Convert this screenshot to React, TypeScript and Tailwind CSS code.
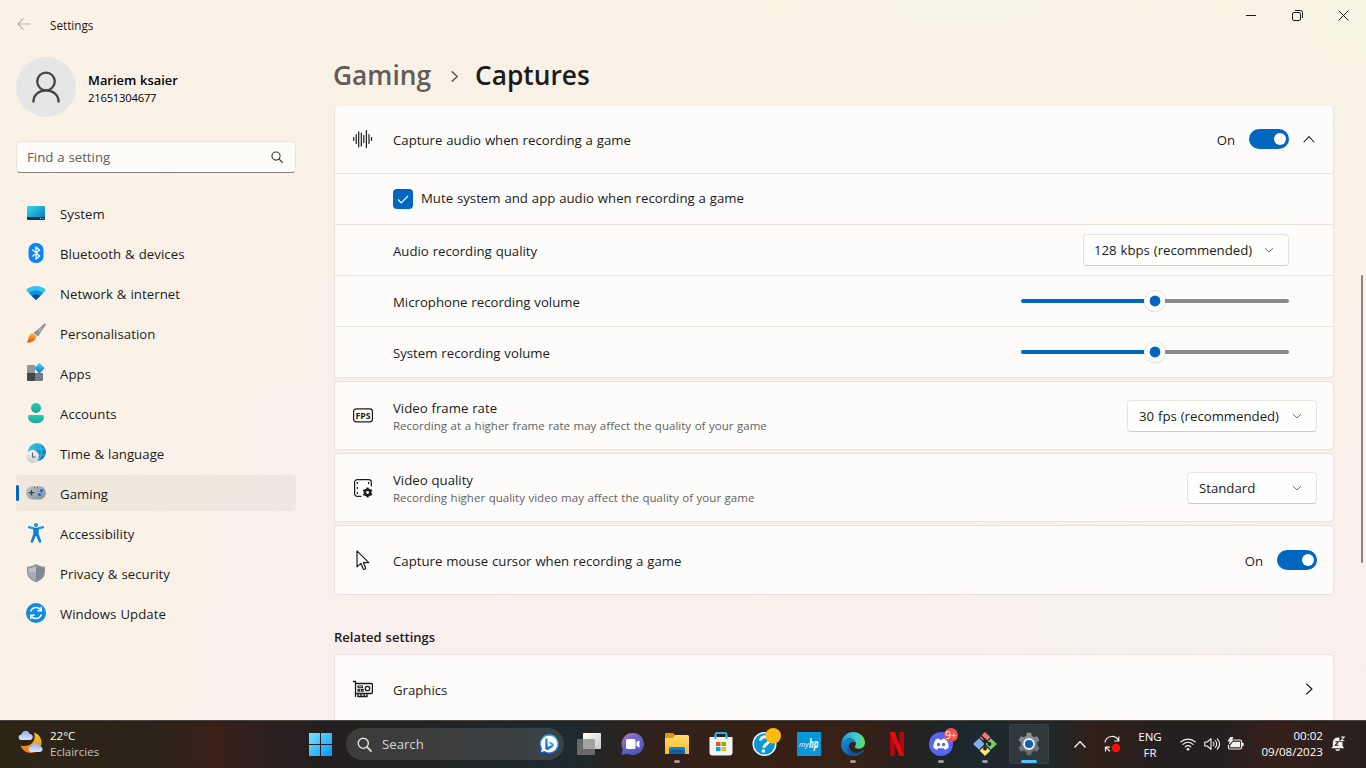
import React from "react";

type IconProps = { className?: string };

const Chevron = ({ dir, size = 12, stroke = 1.1, className = "" }: { dir: "up" | "down" | "right"; size?: number; stroke?: number; className?: string }) => {
  const d = dir === "up" ? "M1 9 6 3.6 11 9" : dir === "down" ? "M1.5 4 6 8.4 10.5 4" : "M3.5 1 9 6 3.5 11";
  return (
    <svg width={size} height={size} viewBox="0 0 12 12" fill="none" stroke="currentColor" className={className}>
      <path d={d} strokeWidth={stroke} strokeLinecap="round" strokeLinejoin="round" />
    </svg>
  );
};

const SystemIcon = () => (
  <svg width="20" height="20" viewBox="0 0 20 20">
    <defs>
      <linearGradient id="sys" x1="0" y1="0" x2="1" y2="1">
        <stop offset="0" stopColor="#35dbe6" />
        <stop offset="1" stopColor="#1170c0" />
      </linearGradient>
    </defs>
    <rect x="1" y="3" width="18" height="14" rx="1" fill="url(#sys)" />
    <path d="M1 14h18v2a1 1 0 0 1-1 1H2a1 1 0 0 1-1-1z" fill="#0b3a5b" />
    <path d="M14 15.500h1M16.500 15.500h1" stroke="#9fd3ea" strokeWidth="1" />
  </svg>
);

const BluetoothIcon = () => (
  <svg width="20" height="20" viewBox="0 0 20 20">
    <rect x="2.500" y="0" width="15" height="20" rx="7" fill="#0a84ff" />
    <path d="M6.300 6.500 13.500 13 10 16V4l3.500 3-7.200 6.500" fill="none" stroke="#fff" strokeWidth="1.300" strokeLinejoin="round" />
  </svg>
);

const WifiColorIcon = () => (
  <svg width="20" height="20" viewBox="0 0 20 20">
    <path d="M10 17 0 7.200C5.500 1.700 14.500 1.700 20 7.200z" fill="#35c5f1" />
    <path d="M10 17 3 10.200c3.900-3.800 10.100-3.800 14 0z" fill="#1590df" />
    <path d="M10 17 5.800 13c2.400-2.200 6-2.200 8.400 0z" fill="#0d4f9e" />
  </svg>
);

const BrushIcon = () => (
  <svg width="20" height="20" viewBox="0 0 20 20">
    <defs>
      <linearGradient id="brA" x1="1" y1="0" x2="0" y2="1">
        <stop offset="0" stopColor="#7b838c" />
        <stop offset=".5" stopColor="#a4abb2" />
        <stop offset="1" stopColor="#676f78" />
      </linearGradient>
      <linearGradient id="brB" x1=".7" y1="0" x2=".4" y2="1">
        <stop offset="0" stopColor="#ffb43a" />
        <stop offset="1" stopColor="#e9560c" />
      </linearGradient>
    </defs>
    <path d="M18.600.5c.9-.3 1.500.5 1 1.400L12.300 13.500 7.600 9.800z" fill="url(#brA)" />
    <path d="M6.200 10.600c1.800-.5 4.100 1.200 3.900 3.200C9.800 18 5 20.300.5 19.300c1.800-1.100 1.600-2.700 2.200-5 .4-1.900 1.700-3.200 3.500-3.700z" fill="url(#brB)" />
  </svg>
);

const AppsIcon = () => (
  <svg width="20" height="20" viewBox="0 0 20 20">
    <defs>
      <linearGradient id="apA" x1="0" y1="0" x2="1" y2="1">
        <stop offset="0" stopColor="#4bd2f5" />
        <stop offset="1" stopColor="#0c6fc9" />
      </linearGradient>
    </defs>
    <path d="M2 2h7v8H1V3a1 1 0 0 1 1-1z" fill="#9298a1" />
    <path d="M1 10h8v8H2a1 1 0 0 1-1-1z" fill="#43484c" />
    <path d="M9 10h8v7a1 1 0 0 1-1 1H9z" fill="#747b84" />
    <rect x="9.600" y="1.500" width="7.600" height="7.600" rx=".8" transform="rotate(45 13.400 5.300)" fill="url(#apA)" />
  </svg>
);

const AccountIcon = () => (
  <svg width="20" height="20" viewBox="0 0 20 20">
    <defs>
      <linearGradient id="acA" x1="0" y1="0" x2="0" y2="1">
        <stop offset="0" stopColor="#29c9b5" />
        <stop offset="1" stopColor="#13a892" />
      </linearGradient>
    </defs>
    <circle cx="10" cy="5" r="5" fill="url(#acA)" />
    <path d="M4 12h12a2 2 0 0 1 2 2c0 4-3.500 6-8 6s-8-2-8-6a2 2 0 0 1 2-2z" fill="url(#acA)" />
  </svg>
);

const TimeIcon = () => (
  <svg width="20" height="20" viewBox="0 0 20 20">
    <defs>
      <linearGradient id="tmA" x1="0" y1="0" x2="1" y2="1">
        <stop offset="0" stopColor="#34d1de" />
        <stop offset="1" stopColor="#0b62b8" />
      </linearGradient>
      <linearGradient id="tmB" x1="0" y1="0" x2="0" y2="1">
        <stop offset="0" stopColor="#f7f7f9" />
        <stop offset="1" stopColor="#c9ccd3" />
      </linearGradient>
    </defs>
    <circle cx="11" cy="9" r="9" fill="url(#tmA)" />
    <g fill="none" stroke="#45c9e2" strokeWidth=".8">
      <ellipse cx="11" cy="9" rx="4.200" ry="8.600" />
      <path d="M3 6h16M3 12h16" />
    </g>
    <circle cx="6.500" cy="13.500" r="6.500" fill="url(#tmB)" />
    <path d="M6.500 9.500v4.500h3" fill="none" stroke="#5b5f66" strokeWidth="1.100" />
  </svg>
);

const GamepadIcon = () => (
  <svg width="20" height="20" viewBox="0 0 20 20">
    <defs>
      <linearGradient id="gpA" x1="0" y1="0" x2="1" y2="1">
        <stop offset="0" stopColor="#c3c8ce" />
        <stop offset="1" stopColor="#858d97" />
      </linearGradient>
    </defs>
    <rect x="0" y="3" width="20" height="13.500" rx="6.700" fill="url(#gpA)" />
    <path d="M5.500 7v5.500M2.800 9.700h5.500" stroke="#3b4046" strokeWidth="1.300" />
    <path d="M8 4.800h1M11 4.800h1" stroke="#3b4046" strokeWidth="1" />
    <circle cx="15.500" cy="7.600" r="1.600" fill="#0b6fd0" />
    <circle cx="13.500" cy="11.600" r="1.600" fill="#0b6fd0" />
  </svg>
);

const AccessIcon = () => (
  <svg width="20" height="20" viewBox="0 0 20 20">
    <circle cx="10" cy="2.100" r="2.100" fill="#1597e4" />
    <path
      d="M3 4.200 10 6l7-1.800"
      fill="none" stroke="#1597e4" strokeWidth="2.300" strokeLinecap="round" strokeLinejoin="round"
    />
    <path d="M7.300 5h5.400v6l2.500 7c.5 1.700-1.600 2.500-2.300.9L10.300 13h-.6l-2.600 5.900c-.7 1.600-2.800.8-2.300-.9l2.500-7z" fill="#0c80d8" />
  </svg>
);

const ShieldIcon = () => (
  <svg width="20" height="20" viewBox="0 0 20 20">
    <path d="M10 1c2.500 1.700 5.500 2.600 9 2.700V9c0 5-4 8.500-9 10.200C5 17.500 1 14 1 9V3.700C4.500 3.600 7.500 2.700 10 1z" fill="#8b9199" />
    <path d="M10 3c2.200 1.300 4.700 2 7.600 2.200V9c0 4.200-3.400 7.200-7.600 8.600z" fill="#818891" />
    <path d="M10 3C7.800 4.300 5.300 5 2.400 5.200V9c0 4.200 3.400 7.200 7.600 8.600z" fill="#bfc3c8" />
    <path d="M2.400 9H10v8.600C5.800 16.200 2.400 13.200 2.400 9z" fill="#a5abb2" />
  </svg>
);

const UpdateIcon = () => (
  <svg width="20" height="20" viewBox="0 0 20 20">
    <circle cx="10" cy="10" r="10" fill="#0c8be0" />
    <g fill="none" stroke="#fff" strokeWidth="1.500">
      <path d="M4.700 8.500A5.600 5.600 0 0 1 14.800 7M15.300 11.500A5.600 5.600 0 0 1 5.200 13" />
      <path d="M15.300 3.800v4h-4M4.700 16.200v-4h4" />
    </g>
  </svg>
);

const nav: { label: string; icon: () => React.ReactElement; active?: boolean }[] = [
  { label: "System", icon: SystemIcon },
  { label: "Bluetooth & devices", icon: BluetoothIcon },
  { label: "Network & internet", icon: WifiColorIcon },
  { label: "Personalisation", icon: BrushIcon },
  { label: "Apps", icon: AppsIcon },
  { label: "Accounts", icon: AccountIcon },
  { label: "Time & language", icon: TimeIcon },
  { label: "Gaming", icon: GamepadIcon, active: true },
  { label: "Accessibility", icon: AccessIcon },
  { label: "Privacy & security", icon: ShieldIcon },
  { label: "Windows Update", icon: UpdateIcon },
];

const WaveIcon = () => (
  <svg width="20" height="20" viewBox="0 0 20 20" stroke="#1b1b1b" strokeWidth="1.200" strokeLinecap="round">
    <path d="M.7 8.500v3M3.200 5.500v9M5.700 2.800v15M8.300 4v13M10.800 6.500v7M13.400 1.500v17M16 5.500v9M18.500 8.500v3" />
  </svg>
);

const FpsIcon = () => (
  <svg width="20" height="20" viewBox="0 0 20 20">
    <rect x=".6" y="2.900" width="18.800" height="13" rx="2.600" fill="none" stroke="#1b1b1b" strokeWidth="1.200" />
    <text x="10" y="12.500" textAnchor="middle" textLength="15" lengthAdjust="spacingAndGlyphs" fontFamily="Open Sans" fontWeight="700" fontSize="8.500" fill="#1b1b1b">FPS</text>
  </svg>
);

const VideoQualityIcon = () => (
  <svg width="20" height="20" viewBox="0 0 20 20" fill="none" stroke="#1b1b1b">
    <path d="M8 18.300H4.200a2.600 2.600 0 0 1-2.600-2.600V4.200a2.600 2.600 0 0 1 2.600-2.600h11.500a2.600 2.600 0 0 1 2.600 2.600V8" strokeWidth="1.200" strokeLinecap="round" />
    <path d="M4.300 4v2M4.300 9v2M4.300 14v2M15.600 4v2" strokeWidth="1.200" />
    <circle cx="14.600" cy="14.500" r="2.700" strokeWidth="2.500" />
    <path d="M14.600 9.500v2M14.600 17.500v2M10.300 12l1.700 1M17.200 16l1.700 1M10.300 17l1.700-1M17.200 13l1.700-1" strokeWidth="2" />
  </svg>
);

const CursorIcon = () => (
  <svg width="20" height="20" viewBox="0 0 20 20" fill="none" stroke="#1b1b1b" strokeWidth="1.200" strokeLinejoin="round">
    <path d="M4 .9v16l3.900-3.500 2.200 5.200c.3.800 1 1 1.700.7.700-.3 1-1 .7-1.700l-2.200-5h5.500z" />
  </svg>
);

const GraphicsIcon = () => (
  <svg width="20" height="20" viewBox="0 0 20 20" fill="none" stroke="#1b1b1b" strokeWidth="1.300">
    <path d="M0 2.500h2.500V18M2.500 4.500H18.400a1 1 0 0 1 1 1v8a1 1 0 0 1-1 1H2.500M5 14.500v3h9v-3M8 14.500v3M11 14.500v3" />
    <circle cx="14.500" cy="9.500" r="2.200" />
    <path d="M5 7h4.500v1.800H5zM5 10.500h1.700v1.700H5zM8.500 10.500h1.700v1.700H8.500z" strokeWidth="1.100" />
  </svg>
);

const Toggle = () => (
  <div className="flex h-5 w-10 items-center justify-end rounded-full bg-[#0067c0] pr-[3px]">
    <div className="size-3 rounded-full bg-white" />
  </div>
);

const Slider = () => (
  <div className="flex w-[268px] items-center">
    <div className="h-1 flex-1 rounded-l-full bg-[#0067c0]" />
    <div className="flex size-5 items-center justify-center rounded-full bg-white shadow-[0_0_0_1px_#ece9e4,0_1px_1px_#b9b7b4]">
      <div className="size-2.5 rounded-full bg-[#0067c0] shadow-[0_0_0_0.4px_#0067c0]" />
    </div>
    <div className="h-1 flex-1 rounded-r-full bg-[#8b8a88]" />
  </div>
);

const Select = ({ label, className }: { label: string; className: string }) => (
  <div className={`flex h-8 items-center justify-between rounded-[4px] border border-[#e8e5e1] border-b-[#cfcdca] bg-[#fefefd] pr-3.5 ${className}`}>
    <span>{label}</span>
    <Chevron dir="down" size={10} className="text-[#5f5f5f]" />
  </div>
);

const SubRow = ({ children, last }: { children: React.ReactNode; last?: boolean }) => (
  <div className={`flex items-center justify-between pr-11 pl-[58px] ${last ? "h-[50px]" : "h-[51px] border-b border-[#eae4df]"}`}>{children}</div>
);

const Card = ({ icon, title, sub, children, className }: { icon: React.ReactNode; title: string; sub?: string; children: React.ReactNode; className: string }) => (
  <section className={`mt-[3px] flex items-center rounded-[4px] border border-[#eae2dd] bg-[#fdfcfa] pr-4 pl-[18px] ${className}`}>
    {icon}
    <div className="ml-5 flex-1 pt-0.5">
      <div className="leading-[18px]">{title}</div>
      {sub && <div className="text-[11.500px] leading-[17px] tracking-[0.02px] text-[#636261]">{sub}</div>}
    </div>
    {children}
  </section>
);

const TaskCell = ({ children, run }: { children: React.ReactNode; run?: boolean }) => (
  <div className="relative flex h-12 w-11 shrink-0 items-center justify-center">
    {children}
    {run && <div className="absolute bottom-[5px] left-[19px] h-[3px] w-1.5 rounded-full bg-[#9b9794]" />}
  </div>
);

const WeatherIcon = () => (
  <svg width="26" height="26" viewBox="0 0 26 26" className="-mt-1">
    <defs>
      <linearGradient id="moon" x1=".5" y1="0" x2=".3" y2="1">
        <stop offset="0" stopColor="#f6bf2e" />
        <stop offset="1" stopColor="#e67a1b" />
      </linearGradient>
      <linearGradient id="cloud" x1="0" y1="0" x2="0" y2="1">
        <stop offset="0" stopColor="#8eaff0" />
        <stop offset="1" stopColor="#dce8fd" />
      </linearGradient>
    </defs>
    <path d="M16 3.500C21 5 24 9.500 23.500 14.500 23 20 19 24 13 24c-5 0-9-3-10.500-7.500C12 19 19 12 16 3.500z" fill="url(#moon)" />
    <path d="M3.500 11C-.3 11-.3 5.500 3.500 5.500 4.300.8 10.500.6 11.700 5c4-.3 4.100 6 0 6z" fill="url(#cloud)" />
    <path d="M13.500 23c-4 0-4-5.500-.2-5.500.8-4.500 6.900-4.500 8-.2 4.400-.2 4.500 5.700.2 5.700z" fill="url(#cloud)" />
  </svg>
);

const WindowsIcon = () => (
  <svg width="24" height="24" viewBox="0 0 24 24">
    <defs>
      <linearGradient id="win" x1="0" y1="0" x2="24" y2="24" gradientUnits="userSpaceOnUse">
        <stop offset="0" stopColor="#7ce9ff" />
        <stop offset="1" stopColor="#0a94fb" />
      </linearGradient>
    </defs>
    <path d="M1.500 1H12v11H1V1.500zM13 1h10.500l.5.500V12H13zM1 13h11v11H1.500l-.5-.5zM13 13h11v10.500l-.5.500H13z" fill="url(#win)" />
  </svg>
);

const SearchGlyph = ({ className }: IconProps) => (
  <svg viewBox="0 0 16 16" fill="none" stroke="currentColor" strokeLinecap="round" className={className}>
    <circle cx="6.700" cy="6.700" r="5.400" strokeWidth="1.500" />
    <path d="m10.800 10.800 4.200 4.200" strokeWidth="1.700" />
  </svg>
);

const BingIcon = () => (
  <svg width="20" height="20" viewBox="0 0 20 20">
    <defs>
      <linearGradient id="bing" x1="1" y1="0" x2="0" y2="1">
        <stop offset="0" stopColor="#35c7f4" />
        <stop offset="1" stopColor="#174ce0" />
      </linearGradient>
    </defs>
    <path d="M10 1a9 9 0 1 1-4.500 16.800L1.300 19l1-4.500A9 9 0 0 1 10 1z" fill="#fff" stroke="url(#bing)" strokeWidth="1.300" />
    <path d="M6.300 4 8.600 4.900v8.200l4.300-2.300-2-1-1-2.400 3.600 1.500c1.600.8 1.700 3.200.2 4.200L8.600 16.300 6.300 14.900z" fill="url(#bing)" />
  </svg>
);

const TaskViewIcon = () => (
  <svg width="24" height="24" viewBox="0 0 24 24">
    <defs>
      <linearGradient id="tv" x1="0" y1="0" x2="1" y2="1">
        <stop offset="0" stopColor="#fff" />
        <stop offset="1" stopColor="#c8c8c8" />
      </linearGradient>
    </defs>
    <rect x="6" y="1" width="18" height="16" rx=".7" fill="url(#tv)" />
    <rect x="0" y="7" width="18" height="16" rx=".7" fill="#6b6967" />
    <path d="M6 7h12v10H6z" fill="#a3a2a1" />
  </svg>
);

const ChatIcon = () => (
  <svg width="24" height="24" viewBox="0 0 24 24">
    <defs>
      <linearGradient id="chat" x1=".1" y1="0" x2=".7" y2="1">
        <stop offset="0" stopColor="#a970c2" />
        <stop offset=".5" stopColor="#6a64c5" />
        <stop offset="1" stopColor="#4b55bd" />
      </linearGradient>
    </defs>
    <path d="M11.800 1a11 11 0 1 1-5 20.700L.3 23 2 17.500A11 11 0 0 1 11.800 1z" fill="url(#chat)" />
    <rect x="5" y="7" width="9.500" height="10" rx="1.500" fill="#fff" />
    <path d="m15.300 10.500 2.300-2c.5-.3.900 0 .9.400v6.200c0 .5-.5.700-.9.400l-2.300-2z" fill="#fff" />
  </svg>
);

const ExplorerIcon = () => (
  <svg width="24" height="24" viewBox="0 0 24 24">
    <defs>
      <linearGradient id="fold" x1="0" y1="0" x2="0" y2="1">
        <stop offset="0" stopColor="#ffdd6e" />
        <stop offset="1" stopColor="#f7b92a" />
      </linearGradient>
      <linearGradient id="foldb" x1="0" y1="0" x2="0" y2="1">
        <stop offset="0" stopColor="#1487d8" />
        <stop offset="1" stopColor="#0d5ca8" />
      </linearGradient>
    </defs>
    <path d="M0 2.200C0 1.500.5 1 1.200 1H8l2.500 2.500V8H0z" fill="#dc9a0e" />
    <path d="M0 6h7.500L10.500 3h12c.8 0 1.500.7 1.500 1.500V22H0z" fill="url(#fold)" />
    <path d="M4 22v-5.500A1.500 1.500 0 0 1 5.500 15h13a1.500 1.500 0 0 1 1.500 1.500V22z" fill="url(#foldb)" />
    <path d="M7 19h10" stroke="#0a4e92" strokeWidth="1.300" strokeLinecap="round" />
  </svg>
);

const StoreIcon = () => (
  <svg width="24" height="24" viewBox="0 0 24 24">
    <path d="M6.500 6V2.500A1.500 1.500 0 0 1 8 1h8a1.500 1.500 0 0 1 1.500 1.500V6" fill="none" stroke="#27b2e8" strokeWidth="2" />
    <path d="M.5 5h23v15.500a3 3 0 0 1-3 3h-17a3 3 0 0 1-3-3z" fill="#f4f4f4" />
    <path d="M6.500 7V3.500M17.500 7V3.500" stroke="#27b2e8" strokeWidth="2" />
    <path d="M7 10h4.500v4H7z" fill="#f05022" />
    <path d="M12.500 10H17v4h-4.500z" fill="#7db800" />
    <path d="M7 15h4.500v4H7z" fill="#00a3ee" />
    <path d="M12.500 15H17v4h-4.500z" fill="#fdb800" />
  </svg>
);

const HelpIcon = () => (
  <svg width="32" height="32" viewBox="0 0 32 32">
    <circle cx="15.500" cy="16" r="11.300" fill="#0d96d6" stroke="#e9f5fb" strokeWidth="1.500" />
    <path d="M11.500 12.500c.3-5.200 9-4.800 8.500.2-.4 3.300-4.500 3.100-5.200 7" fill="none" stroke="#fff" strokeWidth="2.800" />
    <circle cx="14.300" cy="23" r="1.800" fill="#fff" />
    <circle cx="24.200" cy="7.800" r="7.800" fill="#fdbb0d" />
  </svg>
);

const MyHpIcon = () => (
  <div className="flex size-6 items-center justify-center bg-[#0796d6]">
    <svg width="22" height="16" viewBox="0 0 22 16" className="overflow-visible">
      <text x="1" y="11" fontFamily="Open Sans" fontStyle="italic" fontSize="8" textLength="9.500" lengthAdjust="spacingAndGlyphs" fill="#fff">my</text>
      <text x="11" y="11.500" fontFamily="Open Sans" fontStyle="italic" fontWeight="700" fontSize="11.500" textLength="9.500" lengthAdjust="spacingAndGlyphs" fill="#fff">hp</text>
    </svg>
  </div>
);

const EdgeIcon = () => (
  <svg width="24" height="24" viewBox="0 0 24 24">
    <defs>
      <linearGradient id="eA" x1="0" y1=".4" x2="1" y2=".5">
        <stop offset="0" stopColor="#1f9fe0" />
        <stop offset=".55" stopColor="#35c9d8" />
        <stop offset="1" stopColor="#63dd5d" />
      </linearGradient>
      <linearGradient id="eB" x1="0" y1="0" x2="1" y2="1">
        <stop offset="0" stopColor="#1b8fdb" />
        <stop offset="1" stopColor="#0b4a94" />
      </linearGradient>
    </defs>
    <path d="M.2 11.500C1 4.800 6 0 12 0c7 0 12 5 12 10.700 0 3.500-2.700 6-6.200 6-3 0-4.400-1.200-4-2.300 1.100-1 1.500-2.600.7-4.200C13 7 9.500 5.800 6.500 6.600 3.500 7.400 1.200 9.200.2 11.500z" fill="url(#eA)" />
    <path d="M0 12.500C.5 9 4 6.500 8 6.500c3.500 0 6.500 1.700 6.800 4.500C12 9 9 10.500 8.200 13c-1 4.500 3 8.500 7.500 8 3-.2 5-1.700 6.500-2.800.5-.3 1 .2.700.7C20.500 22.300 16.500 24 12 24 5.500 24 0 19 0 12.500z" fill="url(#eB)" />
    <path d="M8.200 13c-1.200 5 3.500 9 9 7.800 2.400-.5 4-1.800 5-2.600.5-.3 1 .2.700.7C20.500 22.300 16.500 24 12.500 24 6.500 22.500 5.500 16.500 8.200 13z" fill="#10529e" />
  </svg>
);

const NetflixIcon = () => (
  <svg width="14" height="24" viewBox="0 0 14 24">
    <path d="M0 0h4.700v23.500L0 24zM9.300 0H14v24l-4.700-.5z" fill="#b3080f" />
    <path d="M0 0h4.700L14 24l-4.700-.5z" fill="#e60a15" />
  </svg>
);

const DiscordIcon = () => (
  <svg width="24" height="24" viewBox="0 0 24 24">
    <circle cx="12" cy="12" r="12" fill="#5865f2" />
    <path d="M6.700 7.500A12 12 0 0 1 10 6.600l.6 1.100h2.800l.6-1.100c1.200.2 2.300.5 3.300.9 1.800 2.500 2.600 5.300 2.200 8.500a11 11 0 0 1-3.700 1.700l-1-1.400H9.200l-1 1.400A11 11 0 0 1 4.500 16c-.3-3 .5-6 2.200-8.500z" fill="#fff" />
    <ellipse cx="9.500" cy="12.500" rx="1.600" ry="1.800" fill="#5865f2" />
    <ellipse cx="14.600" cy="12.500" rx="1.600" ry="1.800" fill="#5865f2" />
  </svg>
);

const GitIcon = () => (
  <svg width="24" height="24" viewBox="0 0 24 24">
    <path d="m12 0 5.300 5.300L12 10.600 6.700 5.300z" fill="#f37878" />
    <path d="M6.200 6.200 11.500 12l-5.300 5.800L0 12z" fill="#80aef5" />
    <path d="M17.800 6.200 24 12l-6.200 5.800L12.500 12z" fill="#80c764" />
    <path d="m12 13.400 5.300 5.300L12 24l-5.300-5.300z" fill="#fbe17c" />
    <path d="m8 3.500 4 4v9M12 8l4.500 4" fill="none" stroke="#242528" strokeWidth="1.600" />
    <circle cx="12" cy="8.500" r="1.900" fill="#242528" />
    <circle cx="12" cy="16.500" r="2" fill="#242528" />
    <circle cx="16.500" cy="12" r="1.900" fill="#242528" />
  </svg>
);

const GearIcon = () => (
  <svg width="24" height="24" viewBox="0 0 24 24">
    <defs>
      <linearGradient id="gear" x1="0" y1="0" x2="0" y2="1">
        <stop offset="0" stopColor="#8c949d" />
        <stop offset="1" stopColor="#606871" />
      </linearGradient>
    </defs>
    <path d="M9.300 3.800 9.800 1c1.400-.3 3-.3 4.400 0l.5 2.800 2.500 1.400 2.600-.9c1.200 1.100 2 2.500 2.600 4l-2.100 1.900v3.600l2.100 1.900c-.6 1.500-1.400 2.900-2.600 4l-2.600-.9-2.500 1.400-.5 2.800c-1.400.3-3 .3-4.400 0l-.5-2.800-2.500-1.400-2.600.9c-1.200-1.100-2-2.500-2.600-4l2.100-1.900v-3.600L1.600 8.300c.6-1.500 1.400-2.900 2.600-4l2.600.9z" fill="url(#gear)" />
    <circle cx="12" cy="12" r="5" fill="#0b5fb5" stroke="#f5f7f8" strokeWidth="1.800" />
  </svg>
);

const SyncIcon = () => (
  <svg width="18" height="18" viewBox="0 0 18 18" fill="none" stroke="#f1efee" strokeWidth="1.200">
    <path d="M2 7.500A7 7 0 0 1 15.500 6M15.800 1.500V6h-4.500M7 12.200H2.500v4.300M2.500 12.200l4.500 4" />
    <circle cx="13" cy="13" r="4.200" fill="#fb0d0d" stroke="none" />
  </svg>
);

const WifiIcon = () => (
  <svg width="16" height="16" viewBox="0 0 16 16" fill="none" stroke="#f4f2f1" strokeWidth="1.200" strokeLinecap="round">
    <path d="M.8 5.900c4.200-3.800 10.200-3.800 14.400 0M3 8.400c3-2.800 7-2.800 10 0M5.200 10.900c1.800-1.600 3.800-1.600 5.600 0" />
    <circle cx="8" cy="13.200" r="1.300" fill="#f4f2f1" stroke="none" />
  </svg>
);

const VolumeIcon = () => (
  <svg width="17" height="16" viewBox="0 0 17 16" fill="none" stroke="#f4f2f1" strokeWidth="1.100" strokeLinecap="round" strokeLinejoin="round">
    <path d="M.8 6v4h2.400L7 13.300V2.700L3.200 6zM9.300 6.300c.8 1.100.8 2.300 0 3.400M11.300 4.500c1.800 2.200 1.800 4.800 0 7M13.300 2.800c2.800 3.200 2.800 7.200 0 10.400" />
  </svg>
);

const BatteryIcon = () => (
  <svg width="17" height="14" viewBox="0 0 17 14">
    <path d="M7 3h6a1.500 1.500 0 0 1 1.500 1.500v6a1.500 1.500 0 0 1-1.500 1.500H3a1.500 1.500 0 0 1-1.500-1.500V8" fill="none" stroke="#f4f2f1" strokeWidth="1.200" />
    <path d="M6 4.700h7v5.600H3.200V8.500z" fill="#f4f2f1" />
    <path d="M15 5.800h1.600v3.400H15zM3.300 0h3.200L5.200 2.600h2L1.500 8.200l1.200-3.800H.5z" fill="#f4f2f1" />
  </svg>
);

const BellIcon = () => (
  <svg width="14" height="16" viewBox="0 0 14 16">
    <path d="M1.800 10.500V6.500A5 5 0 0 1 7 1.500h1.500V6h3V9.500l1.500 2.700H.3zM4.300 13.200h4.800c-.5 2.300-4.300 2.300-4.800 0z" fill="#f4f2f1" />
    <path d="M4.300 5.800h3L4.300 9.300h3.200" fill="none" stroke="#262120" strokeWidth="1.100" />
    <path d="M10 1h3.200L10 4.700h3.300" fill="none" stroke="#f4f2f1" strokeWidth="1.100" />
  </svg>
);

export default function App() {
  return (
    <div className="flex h-[768px] w-[1366px] flex-col overflow-hidden font-['Open_Sans',sans-serif] text-[13.200px] text-[#1b1b1b] [word-spacing:0.5px]">
      <div className="flex h-[720px] flex-col bg-[#f9f1e9] bg-[radial-gradient(ellipse_260px_90px_at_960px_0px,#f6f3e5,transparent),radial-gradient(ellipse_180px_160px_at_1366px_0px,#f6f3e4,transparent),radial-gradient(ellipse_260px_140px_at_1160px_620px,#f5f2ef,transparent),linear-gradient(to_right,#faf2e6_0px,#faf2e7_120px,transparent_320px),linear-gradient(to_bottom,#f9f2e6_0px,#f9f1e7_120px,#f9f0ea_400px,#f9efed_720px)]">
        <header className="flex h-12 shrink-0 items-start">
          <svg width="14" height="12" viewBox="0 0 14 12" className="mt-[18px] ml-[17px]" fill="none" stroke="#b7b0a8" strokeWidth="1.100" strokeLinecap="round">
            <path d="M1 6h12M6 1 1 6l5 5" />
          </svg>
          <span className="mt-[17px] ml-[19px] text-[11.700px] leading-4">Settings</span>
          <div className="flex-1" />
          <div className="flex h-8 w-[46px] items-center justify-center pb-px"><div className="h-px w-2.5 bg-[#1b1b1b]" /></div>
          <div className="flex h-[31px] w-[46px] items-center justify-center">
            <svg width="11" height="11" viewBox="0 0 11 11" fill="none" stroke="#1b1b1b">
              <rect x=".5" y="2.500" width="8" height="8" rx="1.500" />
              <path d="M3 .5h5.500a2 2 0 0 1 2 2V8" />
            </svg>
          </div>
          <div className="flex h-[31px] w-[46px] items-center justify-center">
            <svg width="11" height="11" viewBox="0 0 11 11" stroke="#1b1b1b"><path d="m.5.5 10 10M10.500.5l-10 10" /></svg>
          </div>
        </header>

        <div className="flex min-h-0 flex-1">
          <aside className="ml-4 w-[280px] shrink-0">
            <div className="mt-[9px] flex items-center">
              <div className="flex size-[60px] items-center justify-center rounded-full bg-[#e6e6e6]">
                <svg width="28" height="32" viewBox="0 0 28 32" fill="none" stroke="#444" strokeWidth="2.300">
                  <circle cx="14" cy="10.500" r="8.800" />
                  <path d="M1.400 31.500C1 15.200 27 15.200 26.600 31.500" />
                </svg>
              </div>
              <div className="ml-3 pt-1">
                <div className="text-[12.900px] leading-[18px] font-semibold text-black">Mariem ksaier</div>
                <div className="text-[11.300px] leading-[18px] tracking-[-0.25px] text-black">21651304677</div>
              </div>
            </div>
            <div className="mt-6 flex h-8 items-center justify-between rounded-[4px] border border-[#ece5da] border-b-[#868481] bg-[#fdfcf9] pr-3 pl-2.5">
              <span className="pt-px text-[#605f5d]">Find a setting</span>
              <SearchGlyph className="size-3 text-[#3a3a3a]" />
            </div>
            <nav className="mt-[22px] flex flex-col gap-1">
              {nav.map(({ label, icon: Icon, active }) => (
                <a key={label} className={`relative flex h-9 items-center rounded-[4px] pl-2.5 ${active ? "bg-black/[0.04]" : ""}`}>
                  {active && <i className="absolute top-2.5 left-0 h-4 w-[3px] rounded-full bg-[#0067c0]" />}
                  <Icon />
                  <span className="mt-[3px] ml-3.5 tracking-[0.05px]">{label}</span>
                </a>
              ))}
            </nav>
          </aside>

          <main className="ml-[38px] w-[1000px] shrink-0">
            <h1 className="-ml-px flex h-[58px] items-center pb-0.5 text-[26.300px] font-semibold">
              <span className="text-[#605d59]">Gaming</span>
              <Chevron dir="right" size={11} stroke={1.7} className="mr-[15px] ml-[18px] text-[#605d59]" />
              <span>Captures</span>
            </h1>
            <section className="rounded-[4px] border border-t-0 border-[#eae2dd] bg-[#fdfcfa]">
              <div className="flex h-[68px] items-center border-b border-[#e8e3dc] pr-[18px] pb-px pl-[18px]">
                <WaveIcon />
                <span className="ml-5 flex-1 pt-[3px]">Capture audio when recording a game</span>
                <span className="mr-3.5 pt-[3px]">On</span>
                <Toggle />
                <Chevron dir="up" className="ml-3.5" />
              </div>
              <SubRow>
                <div className="flex items-center">
                  <div className="flex size-5 items-center justify-center rounded-[4px] bg-[#0067c0]">
                    <svg width="12" height="12" viewBox="0 0 12 12" fill="none" stroke="#fff" strokeWidth="1.200"><path d="m1 6.500 3.200 3.300L11 3" /></svg>
                  </div>
                  <span className="ml-2">Mute system and app audio when recording a game</span>
                </div>
              </SubRow>
              <SubRow><span className="pt-[3px]">Audio recording quality</span><Select label="128 kbps (recommended)" className="w-[206px] pl-2.5 [&>span]:pt-px" /></SubRow>
              <SubRow><span className="pt-[3px]">Microphone recording volume</span><Slider /></SubRow>
              <SubRow last><span className="pt-[3px]">System recording volume</span><Slider /></SubRow>
            </section>
            <Card icon={<FpsIcon />} title="Video frame rate" sub="Recording at a higher frame rate may affect the quality of your game" className="h-[69px]">
              <Select label="30 fps (recommended)" className="w-[190px] pl-[11px] [&>span]:pt-[3px]" />
            </Card>
            <Card icon={<VideoQualityIcon />} title="Video quality" sub="Recording higher quality video may affect the quality of your game" className="h-[69px]">
              <Select label="Standard" className="w-[130px] pl-[11px] [&>span]:pt-[3px]" />
            </Card>
            <Card icon={<CursorIcon />} title="Capture mouse cursor when recording a game" className="h-[70px]">
              <span className="mr-3.5 pt-[3px]">On</span>
              <Toggle />
            </Card>
            <h2 className="mt-8 mb-[7px] text-[13px] leading-5 font-semibold">Related settings</h2>
            <Card icon={<GraphicsIcon />} title="Graphics" className="h-[69px]">
              <Chevron dir="right" className="mr-0.5" />
            </Card>
          </main>
          <div className="mt-[227px] ml-[27px] h-[288px] w-0.5 rounded-full bg-[#8b8581]" />
        </div>
      </div>

      <footer className="flex h-12 shrink-0 items-center bg-[linear-gradient(to_right,#2c2517_0px,#2b2319_150px,#3a1f18_220px,#2b2020_270px,#231f20_330px,#232323_420px,#1d292f_570px,#2f211b_640px,#352017_740px,#382015_860px,#24211f_910px,#1b282e_970px,#20272b_1050px,#302018_1090px,#251f1f_1160px,#241f20_1220px,#35201a_1270px,#261f1e_1366px)] text-white shadow-[inset_0_1px_0_#484440]">
        <div className="flex w-[298px] items-center pl-[18px]">
          <WeatherIcon />
          <div className="ml-1.5 text-[11.500px] leading-4">
            <div>22°C</div>
            <div className="text-[#c9c5be]">Eclaircies</div>
          </div>
        </div>
        <TaskCell><WindowsIcon /></TaskCell>
        <div className="mr-[3px] ml-1 flex h-8 w-[218px] items-center rounded-full bg-white/12 pr-[5px] pl-[11px]">
          <SearchGlyph className="size-[15px] text-[#e4e3e3]" />
          <span className="ml-2.5 flex-1 pt-0.5 text-[#d5d4d3]">Search</span>
          <BingIcon />
        </div>
        <TaskCell><TaskViewIcon /></TaskCell>
        <TaskCell><ChatIcon /></TaskCell>
        <TaskCell run><ExplorerIcon /></TaskCell>
        <TaskCell><StoreIcon /></TaskCell>
        <TaskCell><HelpIcon /></TaskCell>
        <TaskCell><MyHpIcon /></TaskCell>
        <TaskCell run><EdgeIcon /></TaskCell>
        <TaskCell><NetflixIcon /></TaskCell>
        <TaskCell run>
          <DiscordIcon />
          <div className="absolute top-2 left-[25px] flex size-3.5 items-center justify-center rounded-full bg-[#ee5153] text-[10px] leading-none">9+</div>
        </TaskCell>
        <TaskCell run><GitIcon /></TaskCell>
        <TaskCell>
          <div className="relative flex size-10 items-center justify-center rounded-[4px] border border-white/5 bg-white/8">
            <GearIcon />
            <i className="absolute bottom-0 h-[3px] w-4 rounded-full bg-[#4cc2ff]" />
          </div>
        </TaskCell>
        <div className="ml-[23px] flex items-center">
          <Chevron dir="up" stroke={1.3} />
          <div className="ml-[17px]"><SyncIcon /></div>
          <div className="ml-[13px] w-8 pt-0.5 text-center text-[11.500px] leading-4"><div>ENG</div><div>FR</div></div>
          <div className="ml-3.5 flex items-center"><WifiIcon /><div className="mr-1.5 ml-2"><VolumeIcon /></div><BatteryIcon /></div>
          <div className="ml-3.5 w-[65px] text-right text-[11.600px] leading-4 whitespace-nowrap"><div>00:02</div><div>09/08/2023</div></div>
          <div className="ml-2"><BellIcon /></div>
        </div>
      </footer>
    </div>
  );
}
